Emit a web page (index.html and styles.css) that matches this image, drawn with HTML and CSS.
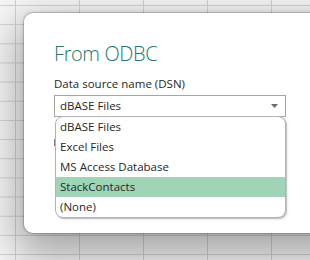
FILE: index.html
```html
<!DOCTYPE html>
<html>
<head>
<meta charset="utf-8">
<link rel="stylesheet" href="styles.css">
</head>
<body>
<div class="sheet">
  <div class="dialog">
    <h1 class="title">From ODBC</h1>
    <div class="field-label">Data source name (DSN)</div>
    <div class="select-wrap">
      <div class="select">
        <span class="select-value">dBASE Files</span>
        <svg class="arrow" width="7" height="4" viewBox="0 0 7 4"><path d="M0 0 H7 L3.5 4 Z" fill="#6b6b6b"/></svg>
      </div>
      <div class="under-mark"></div>
      <ul class="listbox">
        <li class="option">dBASE Files</li>
        <li class="option">Excel Files</li>
        <li class="option">MS Access Database</li>
        <li class="option selected">StackContacts</li>
        <li class="option">(None)</li>
      </ul>
    </div>
  </div>
</div>
</body>
</html>
```
FILE: styles.css
```css
html, body {
  margin: 0;
  padding: 0;
  width: 310px;
  height: 260px;
  overflow: hidden;
}
body {
  font-family: "Open Sans", "Noto Sans", sans-serif;
  background-color: #f6f6f6;
  background-image:
    linear-gradient(to right, #d2d2d2 1px, transparent 1px),
    linear-gradient(to bottom, #d2d2d2 1px, transparent 1px);
  background-size: 64px 100%, 100% 19.17px;
  background-position: 15px 0, 0 5px;
}
.sheet {
  padding: 13px 0 0 24px;
}
.dialog {
  width: 330px;
  height: 220px;
  box-sizing: border-box;
  background: #fff;
  border-radius: 9px;
  padding: 27px 0 0 30px;
  box-shadow: 0 0 0 1px rgba(0,0,0,0.13), 0 0 3px 1px rgba(0,0,0,0.12), 0 16px 40px 8px rgba(0,0,0,0.32);
}
.title {
  margin: 0;
  font-size: 20px;
  line-height: 28px;
  font-weight: 300;
  letter-spacing: -0.4px;
  color: #25766c;
}
.field-label {
  margin-top: 8px;
  font-size: 11.5px;
  line-height: 16px;
  color: #262626;
}
.select-wrap {
  position: relative;
  margin-top: 3px;
  width: 232px;
}
.select {
  display: flex;
  align-items: center;
  justify-content: space-between;
  height: 22px;
  box-sizing: border-box;
  border: 1px solid #a6a6a6;
  padding: 0 7px 0 5px;
  font-size: 11.5px;
  line-height: 20px;
  color: #262626;
}
.arrow {
  display: block;
}
.under-mark {
  position: absolute;
  left: 0;
  top: 44px;
  width: 1px;
  height: 7px;
  background: #777;
}
.listbox {
  position: absolute;
  left: 1px;
  top: 21px;
  width: 231px;
  box-sizing: border-box;
  margin: 0;
  padding: 0;
  list-style: none;
  background: #fff;
  border: 1px solid #b3b3b3;
  border-radius: 8px;
  box-shadow: 1px 1px 0 #c4c4c4, 2px 2px 2px rgba(0,0,0,0.08);
  overflow: hidden;
}
.option {
  height: 20px;
  padding-left: 4px;
  font-size: 11.5px;
  line-height: 20px;
  color: #262626;
}
.option.selected {
  background: #9fd5b6;
}
```
